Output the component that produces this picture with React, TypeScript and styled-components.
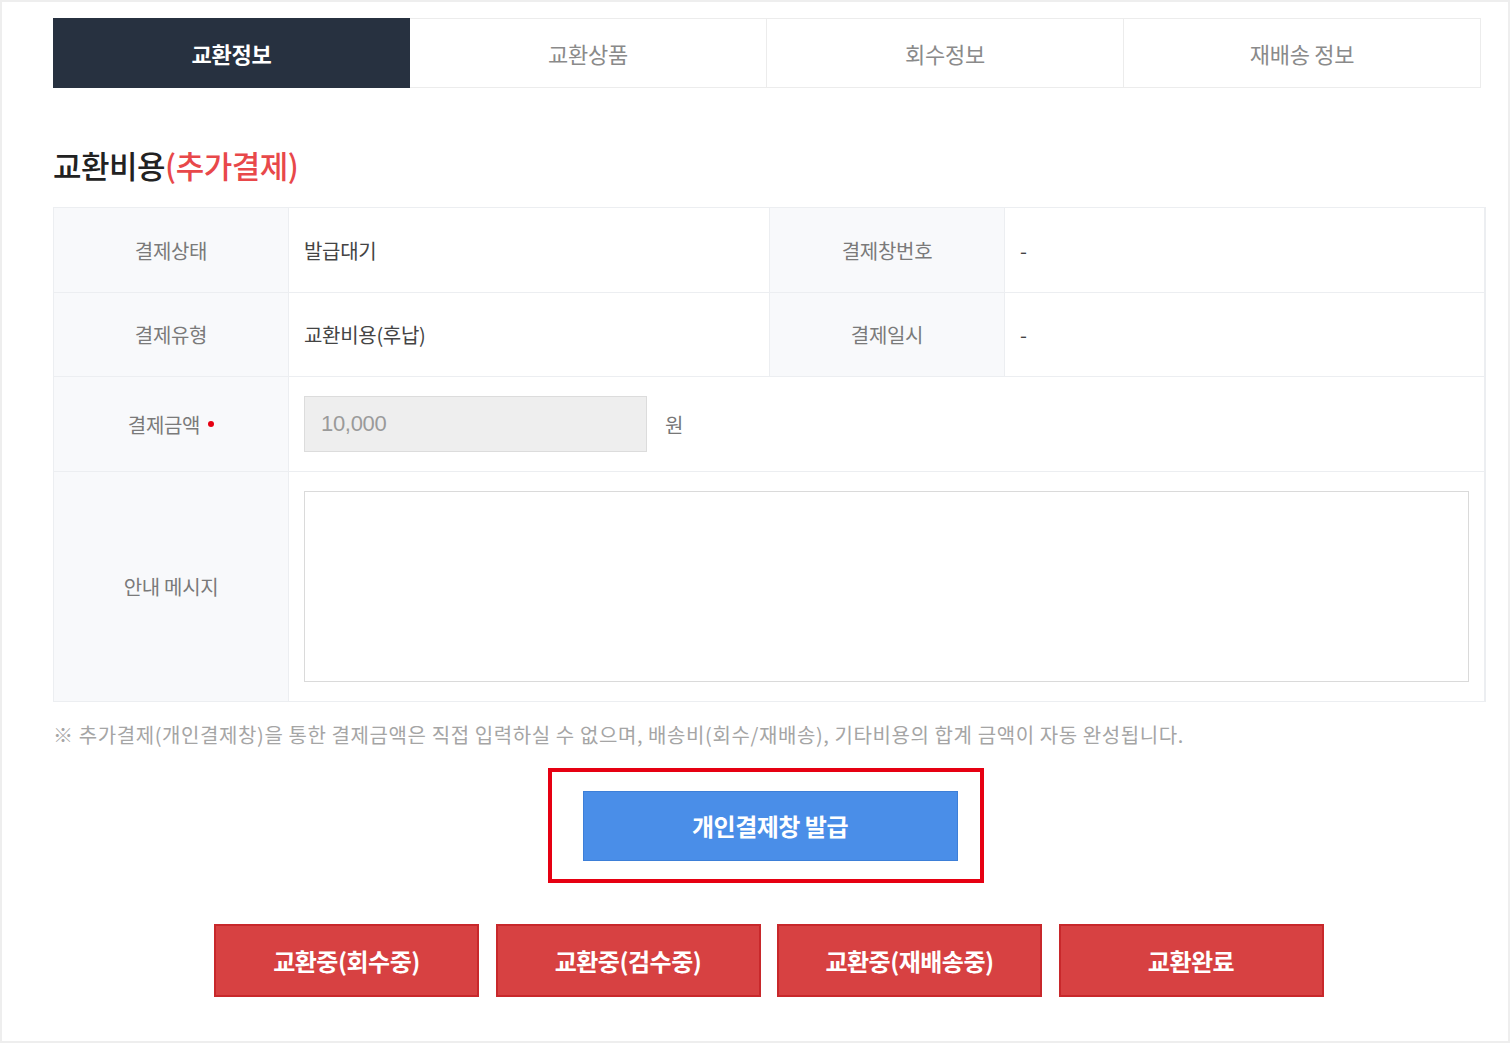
import React from 'react';
import styled, { createGlobalStyle } from 'styled-components';

const GlobalStyle = createGlobalStyle`
  html, body { margin: 0; padding: 0; background: #ffffff; }
  * { box-sizing: border-box; }
  body { font-family: 'Noto Sans CJK KR', 'Noto Sans', sans-serif; }
`;

const Page = styled.div`
  width: 1510px;
  height: 1043px;
  border: 2px solid #eeeeee;
  padding: 16px 24px 0 51px;
  background: #ffffff;
`;

const Tabs = styled.div`
  display: grid;
  grid-template-columns: repeat(4, 357px);
  height: 70px;
`;

const Tab = styled.div<{ $active?: boolean }>`
  display: flex;
  align-items: center;
  justify-content: center;
  font-size: 22px;
  letter-spacing: -0.3px;
  font-weight: ${(p) => (p.$active ? 700 : 400)};
  color: ${(p) => (p.$active ? '#ffffff' : '#8a8a8a')};
  background: ${(p) => (p.$active ? '#273140' : '#ffffff')};
  border: 1px solid ${(p) => (p.$active ? '#273140' : '#ececec')};
  border-left-width: ${(p) => (p.$active ? '1px' : '0')};
`;

const Title = styled.h2`
  margin: 57px 0 22px;
  font-size: 31px;
  font-weight: 500;
  color: #222;
  letter-spacing: -0.5px;
  line-height: 40px;
`;

const Accent = styled.span`
  color: #e8484a;
`;

const Table = styled.div`
  width: 1433px;
  display: grid;
  grid-template-columns: 235px 481px 235px 1fr;
  border: 1px solid #eceef1;
  border-bottom: 0;
`;

const Label = styled.div<{ $h: number }>`
  height: ${(p) => p.$h}px;
  display: flex;
  align-items: center;
  justify-content: center;
  gap: 8px;
  background: #f8f9fb;
  color: #7a7a7a;
  font-size: 20px;
  letter-spacing: -0.3px;
  border-bottom: 1px solid #eceef1;
  border-right: 1px solid #eceef1;
`;

const Value = styled.div<{ $span?: boolean }>`
  display: flex;
  align-items: center;
  gap: 18px;
  padding: 0 15px;
  color: #444;
  font-size: 20px;
  letter-spacing: -0.3px;
  border-bottom: 1px solid #eceef1;
  border-right: 1px solid #eceef1;
  grid-column: ${(p) => (p.$span ? 'span 3' : 'auto')};
`;

const Dot = styled.span`
  width: 6px;
  height: 6px;
  border-radius: 50%;
  background: #e60012;
`;

const AmountInput = styled.div`
  width: 343px;
  height: 56px;
  display: flex;
  align-items: center;
  padding: 0 16px;
  background: #eeeeee;
  border: 1px solid #dcdcdc;
  color: #9a9a9a;
  font-size: 22px;
  font-family: 'Liberation Sans', 'Noto Sans', sans-serif;
`;

const Unit = styled.span`
  color: #777;
  font-size: 20px;
`;

const TextArea = styled.div`
  width: 1166px;
  height: 191px;
  border: 1px solid #dadada;
  background: #fff;
`;

const Note = styled.p`
  margin: 18px 0 0;
  color: #a5a5a5;
  font-size: 20px;
  letter-spacing: 0.6px;
  line-height: 30px;
  white-space: nowrap;
`;

const HighlightRow = styled.div`
  display: flex;
  justify-content: center;
  width: 1433px;
  margin-top: 18px;
  padding-right: 8px;
`;

const Highlight = styled.div`
  width: 436px;
  height: 115px;
  border: 4px solid #e60012;
  display: flex;
  align-items: center;
`;

const BlueButton = styled.button`
  width: 375px;
  height: 70px;
  margin-left: 31px;
  background: #4a8ee8;
  border: 1px solid #3d7fd8;
  color: #ffffff;
  font-family: inherit;
  font-size: 24px;
  font-weight: 700;
  letter-spacing: -0.5px;
`;

const ButtonRow = styled.div`
  display: flex;
  gap: 16.5px;
  margin: 41px 0 0 161px;
`;

const RedButton = styled.button`
  width: 265px;
  height: 73px;
  background: #d74142;
  border: 2px solid #c8282b;
  color: #ffffff;
  font-family: inherit;
  font-size: 24px;
  font-weight: 700;
  letter-spacing: -0.5px;
`;

const tabs = ['교환정보', '교환상품', '회수정보', '재배송 정보'];
const actions = ['교환중(회수중)', '교환중(검수중)', '교환중(재배송중)', '교환완료'];

export default function App() {
  return (
    <>
      <GlobalStyle />
      <Page>
        <Tabs>
          {tabs.map((t, i) => (
            <Tab key={t} $active={i === 0}>
              {t}
            </Tab>
          ))}
        </Tabs>
        <Title>
          교환비용<Accent>(추가결제)</Accent>
        </Title>
        <Table>
          <Label $h={85}>결제상태</Label>
          <Value>발급대기</Value>
          <Label $h={85}>결제창번호</Label>
          <Value>-</Value>
          <Label $h={84}>결제유형</Label>
          <Value>교환비용(후납)</Value>
          <Label $h={84}>결제일시</Label>
          <Value>-</Value>
          <Label $h={95}>
            결제금액<Dot />
          </Label>
          <Value $span>
            <AmountInput>10,000</AmountInput>
            <Unit>원</Unit>
          </Value>
          <Label $h={230}>안내 메시지</Label>
          <Value $span>
            <TextArea />
          </Value>
        </Table>
        <Note>
          ※ 추가결제(개인결제창)을 통한 결제금액은 직접 입력하실 수 없으며, 배송비(회수/재배송), 기타비용의 합계 금액이 자동 완성됩니다.
        </Note>
        <HighlightRow>
          <Highlight>
            <BlueButton>개인결제창 발급</BlueButton>
          </Highlight>
        </HighlightRow>
        <ButtonRow>
          {actions.map((a) => (
            <RedButton key={a}>{a}</RedButton>
          ))}
        </ButtonRow>
      </Page>
    </>
  );
}
